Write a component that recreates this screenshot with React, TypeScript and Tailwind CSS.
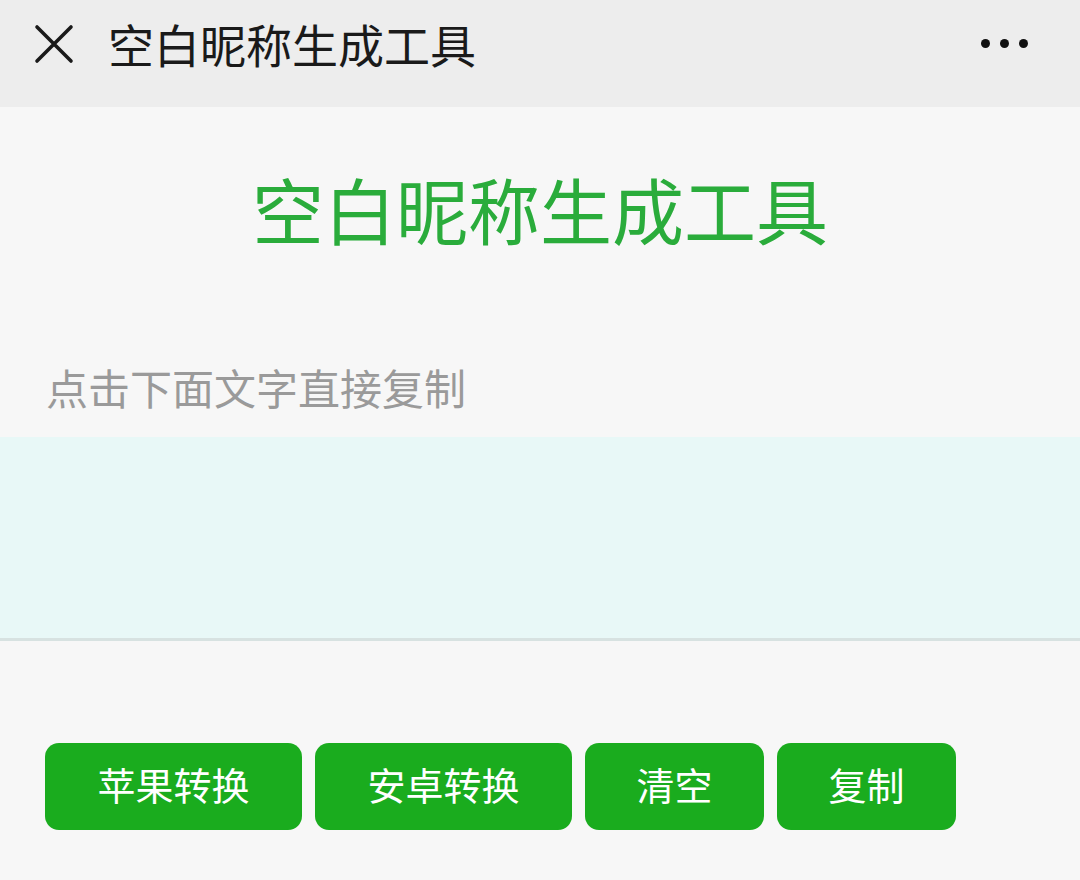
const FONT = 'font-["Noto_Sans_CJK_SC","Noto_Sans",sans-serif]';

const buttons = [
  { label: '苹果转换', w: 'w-[257px]' },
  { label: '安卓转换', w: 'w-[257px]' },
  { label: '清空', w: 'w-[179px]' },
  { label: '复制', w: 'w-[179px]' },
];

export default function App() {
  return (
    <div className={`${FONT} w-[1080px] h-[880px] bg-[#f7f7f7] overflow-hidden`}>
      {/* top bar */}
      <div className="h-[107px] bg-[#ededed] flex items-center pl-[33px] pr-[52px] pb-[20px]">
        <svg width="42" height="42" viewBox="0 0 42 42">
          <path d="M4 4 L38 38 M38 4 L4 38" stroke="#1a1a1a" strokeWidth="3.6" strokeLinecap="round" />
        </svg>
        <div className="ml-[33px] text-[46px] leading-none text-[#1a1a1a] mb-[2px]">空白昵称生成工具</div>
        <div className="ml-auto flex gap-[10px]">
          <span className="w-[9px] h-[9px] rounded-full bg-[#111]" />
          <span className="w-[9px] h-[9px] rounded-full bg-[#111]" />
          <span className="w-[9px] h-[9px] rounded-full bg-[#111]" />
        </div>
      </div>

      {/* heading */}
      <div className="pt-[61px] text-center text-[72px] leading-[80px] text-[#2aac3b]">空白昵称生成工具</div>

      <div className="mt-[115px] pl-[46px] text-[42px] leading-[48px] text-[#9a9a9a]">点击下面文字直接复制</div>

      {/* output area */}
      <div className="mt-[26px] h-[204px] bg-[#e8f8f7] border-b-[3px] border-[#d7e2e1]" />

      {/* buttons */}
      <div className="mt-[102px] pl-[45px] flex gap-[13px]">
        {buttons.map((b) => (
          <button
            key={b.label}
            className={`${b.w} h-[87px] rounded-[14px] bg-[#1aac1e] text-white text-[38px] leading-none flex items-center justify-center pb-[6px]`}
          >
            {b.label}
          </button>
        ))}
      </div>
    </div>
  );
}
